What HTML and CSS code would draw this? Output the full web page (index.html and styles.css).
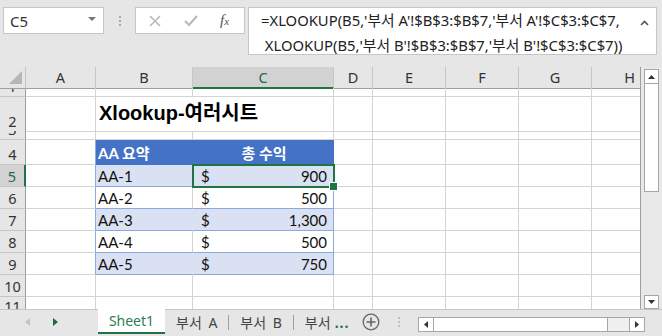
FILE: index.html
```html
<!DOCTYPE html>
<html lang="ko">
<head>
    <meta charset="UTF-8">
    <title>Xlookup - 여러시트</title>
    <link rel="stylesheet" href="styles.css">
</head>
<body>
    <div class="ribbon">
        <div class="namebox">
            <span>C5</span>
            <span class="caret"></span>
        </div>
        <div class="grip"><i></i><i></i><i></i></div>
        <div class="fxbox">
            <svg width="12" height="12" viewBox="0 0 12 12"><path d="M1 1 L11 11 M11 1 L1 11" stroke="#b8b8b8" stroke-width="1.6" fill="none"/></svg>
            <svg width="14" height="12" viewBox="0 0 14 12"><path d="M1 6 L5 10 L13 1" stroke="#b8b8b8" stroke-width="2" fill="none"/></svg>
            <span class="fx"><i>f</i><small>x</small></span>
        </div>
        <div class="formula">
            <div class="ftext">=XLOOKUP(B5,'부서 A'!$B$3:$B$7,'부서 A'!$C$3:$C$7,<br>&nbsp;XLOOKUP(B5,'부서 B'!$B$3:$B$7,'부서 B'!$C$3:$C$7))</div>
            <svg class="collapse" width="9" height="6" viewBox="0 0 9 6"><path d="M1 5 L4.5 1.5 L8 5" stroke="#555" stroke-width="1.6" fill="none"/></svg>
        </div>
    </div>

    <div class="main">
        <div class="sheet">
            <div class="row hdr">
                <div class="corner"><span></span></div>
                <div class="ch">A</div>
                <div class="ch">B</div>
                <div class="ch sel">C</div>
                <div class="ch">D</div>
                <div class="ch">E</div>
                <div class="ch">F</div>
                <div class="ch">G</div>
                <div class="ch">H</div>
            </div>
            <div class="row r-thin">
                <div class="rh">1</div>
                <div class="c"></div><div class="c"></div><div class="c"></div><div class="c"></div><div class="c"></div><div class="c"></div><div class="c"></div><div class="c"></div>
            </div>
            <div class="row r-title">
                <div class="rh">2</div>
                <div class="c"></div>
                <div class="c title">Xlookup-여러시트</div>
                <div class="c"></div><div class="c"></div><div class="c"></div><div class="c"></div><div class="c"></div><div class="c"></div>
            </div>
            <div class="row r-thin">
                <div class="rh">3</div>
                <div class="c"></div><div class="c"></div><div class="c"></div><div class="c"></div><div class="c"></div><div class="c"></div><div class="c"></div><div class="c"></div>
            </div>
            <div class="row r-head">
                <div class="rh">4</div>
                <div class="c edge"></div>
                <div class="c th">AA 요약</div>
                <div class="c th mid">총 수익</div>
                <div class="c"></div><div class="c"></div><div class="c"></div><div class="c"></div><div class="c"></div>
            </div>
            <div class="row">
                <div class="rh sel">5</div>
                <div class="c edge"></div>
                <div class="c td band">AA-1</div>
                <div class="c td band last num cur"><span>$</span><span>900</span></div>
                <div class="c"></div><div class="c"></div><div class="c"></div><div class="c"></div><div class="c"></div>
            </div>
            <div class="row">
                <div class="rh">6</div>
                <div class="c edge"></div>
                <div class="c td">AA-2</div>
                <div class="c td last num"><span>$</span><span>500</span></div>
                <div class="c"></div><div class="c"></div><div class="c"></div><div class="c"></div><div class="c"></div>
            </div>
            <div class="row">
                <div class="rh">7</div>
                <div class="c edge"></div>
                <div class="c td band">AA-3</div>
                <div class="c td band last num"><span>$</span><span>1,300</span></div>
                <div class="c"></div><div class="c"></div><div class="c"></div><div class="c"></div><div class="c"></div>
            </div>
            <div class="row">
                <div class="rh">8</div>
                <div class="c edge"></div>
                <div class="c td">AA-4</div>
                <div class="c td last num"><span>$</span><span>500</span></div>
                <div class="c"></div><div class="c"></div><div class="c"></div><div class="c"></div><div class="c"></div>
            </div>
            <div class="row">
                <div class="rh">9</div>
                <div class="c edge"></div>
                <div class="c td band">AA-5</div>
                <div class="c td band last num"><span>$</span><span>750</span></div>
                <div class="c"></div><div class="c"></div><div class="c"></div><div class="c"></div><div class="c"></div>
            </div>
            <div class="row">
                <div class="rh">10</div>
                <div class="c"></div><div class="c"></div><div class="c"></div><div class="c"></div><div class="c"></div><div class="c"></div><div class="c"></div><div class="c"></div>
            </div>
            <div class="row">
                <div class="rh top">11</div>
                <div class="c"></div><div class="c"></div><div class="c"></div><div class="c"></div><div class="c"></div><div class="c"></div><div class="c"></div><div class="c"></div>
            </div>
        </div>

        <div class="vscroll">
            <div class="sbtn up"><svg width="7" height="4" viewBox="0 0 7 4"><path d="M0 4 L3.5 0 L7 4 Z" fill="#333"/></svg></div>
            <div class="vthumb"></div>
            <div class="vtrack"></div>
            <div class="sbtn down"><svg width="7" height="4" viewBox="0 0 7 4"><path d="M0 0 L3.5 4 L7 0 Z" fill="#333"/></svg></div>
        </div>
    </div>

    <div class="tabbar">
        <div class="nav">
            <svg width="5" height="8" viewBox="0 0 5 8"><path d="M5 0 L0 4 L5 8 Z" fill="#c4c4c4"/></svg>
            <svg width="5" height="8" viewBox="0 0 5 8"><path d="M0 0 L5 4 L0 8 Z" fill="#1e6b3e"/></svg>
        </div>
        <div class="tab current">Sheet1</div>
        <div class="tab">부서 A</div>
        <div class="tsep"></div>
        <div class="tab">부서 B</div>
        <div class="tsep"></div>
        <div class="tab cut">부서 <b>...</b></div>
        <div class="addsheet">
            <svg width="18" height="18" viewBox="0 0 18 18"><circle cx="9" cy="9" r="7.8" stroke="#666" stroke-width="1.3" fill="none"/><path d="M9 4.5 V13.5 M4.5 9 H13.5" stroke="#666" stroke-width="1.6"/></svg>
        </div>
        <div class="grip small"><i></i><i></i><i></i></div>
        <div class="hscroll">
            <div class="sbtn"><svg width="4" height="7" viewBox="0 0 4 7"><path d="M4 0 L0 3.5 L4 7 Z" fill="#333"/></svg></div>
            <div class="hthumb"></div>
            <div class="htrack"></div>
            <div class="sbtn"><svg width="4" height="7" viewBox="0 0 4 7"><path d="M0 0 L4 3.5 L0 7 Z" fill="#333"/></svg></div>
        </div>
    </div>
</body>
</html>
```

FILE: styles.css
```css
* {
    box-sizing: border-box;
}

body {
    margin: 0;
    width: 662px;
    height: 336px;
    overflow: hidden;
    background: #e6e6e6;
    font-family: "Noto Sans", "Noto Sans CJK KR", sans-serif;
    color: #222;
}

/* formula bar */
.ribbon {
    height: 67px;
    display: flex;
    align-items: flex-start;
    padding-top: 7px;
}

.namebox {
    margin-left: 3px;
    width: 101px;
    height: 27px;
    background: white;
    border: 1px solid #c6c6c6;
    display: flex;
    align-items: center;
    justify-content: space-between;
    padding: 0 7px 0 6px;
    font-size: 15px;
    color: #333;
}

.caret {
    width: 0;
    height: 0;
    border-left: 4px solid transparent;
    border-right: 4px solid transparent;
    border-top: 4px solid #777;
    margin-top: -4px;
}

.grip {
    width: 31px;
    height: 27px;
    display: flex;
    flex-direction: column;
    align-items: center;
    justify-content: center;
    gap: 2px;
}

.grip i {
    width: 2px;
    height: 2px;
    background: #aaa;
}

.fxbox {
    width: 110px;
    height: 27px;
    background: white;
    border: 1px solid #c6c6c6;
    display: flex;
    align-items: center;
    padding-left: 13px;
    gap: 23px;
}

.fx {
    font-family: "Liberation Serif", serif;
    font-size: 15px;
    color: #555;
    margin-left: -1px;
}

.fx small {
    font-size: 11px;
    font-style: italic;
}

.formula {
    margin-left: 3px;
    width: 409px;
    height: 48px;
    background: white;
    border: 1px solid #c6c6c6;
    display: flex;
    justify-content: space-between;
    padding: 0 7px 0 12px;
}

.ftext {
    font-size: 14.8px;
    line-height: 25px;
    white-space: nowrap;
    color: #222;
}

.collapse {
    margin-top: 12px;
}

/* grid */
.main {
    display: flex;
    height: 242px;
}

.sheet {
    width: 641px;
    height: 242px;
    overflow: hidden;
    background: white;
    border-right: 1px solid #9e9e9e;
}

.row {
    display: grid;
    grid-template-columns: 26px 70px 97px 141px 39px 73px 73px 73px 48px;
    height: 22px;
    font-family: Lato, "Noto Sans CJK KR", sans-serif;
    font-size: 15px;
    color: #111;
}

.row.hdr {
    height: 21px;
}

.row.r-thin {
    height: 9px;
}

.row.r-title {
    height: 34px;
}

.row.r-head {
    height: 25px;
}

.corner {
    background: #e6e6e6;
    border-right: 1px solid #c6c6c6;
    border-bottom: 1px solid #9e9e9e;
    position: relative;
}

.corner span {
    position: absolute;
    right: 3px;
    bottom: 4px;
    width: 0;
    height: 0;
    border-left: 13px solid transparent;
    border-bottom: 13px solid #b6b6b6;
}

.ch {
    background: #e6e6e6;
    border-right: 1px solid #c6c6c6;
    border-bottom: 1px solid #9e9e9e;
    text-align: center;
    line-height: 20px;
    color: #333;
    font-family: "Noto Sans", sans-serif;
    font-size: 14.5px;
}

.ch:last-child {
    border-right: none;
    text-align: right;
    padding-right: 5px;
}

.ch.sel {
    background: #d2d2d2;
    border-bottom: 2px solid #217346;
    color: #1e6b3e;
}

.rh {
    background: #e6e6e6;
    border-right: 1px solid #9e9e9e;
    border-bottom: 1px solid #c6c6c6;
    display: flex;
    align-items: flex-end;
    justify-content: center;
    overflow: hidden;
    line-height: 20px;
    color: #333;
    font-family: "Noto Sans", sans-serif;
    font-size: 14.5px;
}

.rh.top {
    align-items: flex-start;
    line-height: 18px;
}

.rh.sel {
    background: #d2d2d2;
    border-right: 2px solid #217346;
    color: #1e6b3e;
}

.c {
    border-right: 1px solid #d4d4d4;
    border-bottom: 1px solid #d4d4d4;
    display: flex;
    align-items: center;
    white-space: nowrap;
    overflow: visible;
}

.c:last-child {
    border-right: none;
}

.title {
    font-family: "Liberation Sans", "Noto Sans CJK KR", sans-serif;
    font-weight: bold;
    font-size: 20px;
    align-items: flex-end;
    padding: 0 0 5px 3px;
    border-right: none;
    color: #000;
    position: relative;
    z-index: 1;
}

/* table */
.c.edge {
    border-right: 1px solid #8ea9db;
}

.th {
    background: #4472c4;
    color: white;
    font-weight: bold;
    border-right: none;
    border-bottom-color: #4472c4;
    padding-left: 2px;
}

.th.mid {
    justify-content: center;
    border-right: 1px solid #4472c4;
    font-weight: 600;
}

.td {
    border-bottom: 1px solid #8ea9db;
    padding-left: 2px;
}

.td.band {
    background: #d9e1f2;
    border-right-color: #d9e1f2;
}

.td.last,
.td.band.last {
    border-right: 1px solid #8ea9db;
}

.num {
    justify-content: space-between;
    padding: 0 6px 0 8px;
}

/* active cell C5 */
.cur {
    position: relative;
}

.cur::before {
    content: "";
    position: absolute;
    left: -1px;
    top: -1px;
    right: -2px;
    bottom: -2px;
    border: 2px solid #217346;
}

.cur::after {
    content: "";
    position: absolute;
    right: -5px;
    bottom: -5px;
    width: 7px;
    height: 7px;
    background: #217346;
    border: 1px solid white;
}

/* vertical scrollbar */
.vscroll {
    width: 21px;
    display: flex;
    flex-direction: column;
    align-items: center;
    padding: 2px 3px 0 2px;
    background: #e9e9e9;
}

.sbtn {
    width: 15px;
    height: 15px;
    background: white;
    border: 1px solid #a6a6a6;
    display: flex;
    align-items: center;
    justify-content: center;
    flex-shrink: 0;
}

.vthumb {
    width: 15px;
    height: 108px;
    background: white;
    border: 1px solid #a6a6a6;
    border-top: none;
}

.vtrack {
    flex: 1;
}

.sbtn.down {
    height: 14px;
}

/* sheet tabs */
.tabbar {
    height: 27px;
    display: flex;
    align-items: stretch;
    border-top: 1px solid #c6c6c6;
    font-size: 14px;
    color: #444;
}

.nav {
    width: 98px;
    display: flex;
    align-items: center;
    padding-left: 25px;
    gap: 23px;
    padding-bottom: 2px;
}

.tab {
    display: flex;
    align-items: center;
    padding: 0 11px;
    padding-bottom: 2px;
    white-space: nowrap;
    word-spacing: 3px;
}

.tab.current {
    width: 67px;
    height: 25px;
    margin-top: -1px;
    justify-content: center;
    background: #fff;
    color: #2e7d52;
    padding: 0;
    border-bottom: 2px solid #217346;
}

.tab.cut {
    padding-right: 0;
}

.tab.cut b {
    font-weight: bold;
    color: #217346;
    margin-left: 4px;
    letter-spacing: 1px;
}

.tsep {
    width: 1px;
    margin: 5px 0 6px;
    background: #9e9e9e;
}

.addsheet {
    display: flex;
    align-items: center;
    padding: 0 0 2px 13px;
}

.grip.small {
    width: 38px;
    height: auto;
    padding-bottom: 2px;
}

.grip.small i {
    background: #c0c0c0;
}

.hscroll {
    width: 227px;
    height: 15px;
    margin-top: 7px;
    display: flex;
    border: 1px solid #a6a6a6;
    background: #f0f0f0;
}

.hscroll .sbtn {
    width: 14px;
    height: 13px;
    border: none;
}

.hthumb {
    width: 175px;
    background: white;
    border-left: 1px solid #a6a6a6;
    border-right: 1px solid #a6a6a6;
}

.htrack {
    flex: 1;
    border-right: 1px solid #a6a6a6;
}
```
